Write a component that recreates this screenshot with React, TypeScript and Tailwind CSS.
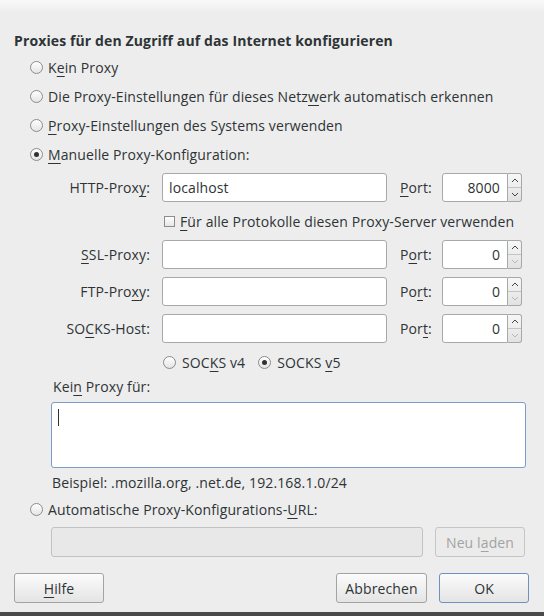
import type { ReactNode } from "react";

const Radio = ({ checked = false }: { checked?: boolean }) => (
  <span className="flex h-[13px] w-[13px] shrink-0 items-center justify-center rounded-full border border-[#8c8c8c] bg-gradient-to-b from-white to-[#e4e4e4]">
    {checked && <span className="h-[5px] w-[5px] rounded-full bg-[#2e3436]" />}
  </span>
);

const U = ({ children }: { children: ReactNode }) => (
  <span className="underline decoration-1 underline-offset-[3px]">{children}</span>
);

const Spin = ({ value, canDown }: { value: string; canDown: boolean }) => (
  <div className="flex h-[29px]">
    <div className="flex w-[66px] items-center justify-end rounded-l-[3px] border border-[#a8a8a8] bg-white pr-[7px]">
      {value}
    </div>
    <div className="flex w-[14px] flex-col rounded-r-[3px] border border-l-0 border-[#a8a8a8] bg-gradient-to-b from-[#f7f7f7] to-[#e2e2e2]">
      <div className="flex flex-1 items-center justify-center border-b border-[#c4c4c4]">
        <svg width="8" height="5" viewBox="0 0 8 5">
          <path d="M1 4 L4 1 L7 4" fill="none" stroke="#444" strokeWidth="1" />
        </svg>
      </div>
      <div className="flex flex-1 items-center justify-center">
        <svg width="8" height="5" viewBox="0 0 8 5">
          <path d="M1 1 L4 4 L7 1" fill="none" stroke={canDown ? "#444" : "#b8b8b8"} strokeWidth="1" />
        </svg>
      </div>
    </div>
  </div>
);

const ProxyRow = ({
  label,
  port,
  value = "",
  portValue,
  canDown,
}: {
  label: ReactNode;
  port: ReactNode;
  value?: string;
  portValue: string;
  canDown: boolean;
}) => (
  <div className="flex h-[29px] items-center">
    <div className="w-[136px] text-right">{label}</div>
    <div className="ml-[12px] flex h-[29px] w-[225px] items-center rounded-[3px] border border-[#a8a8a8] bg-white pl-[6px]">
      {value}
    </div>
    <div className="ml-[13px] w-[42px]">{port}</div>
    <Spin value={portValue} canDown={canDown} />
  </div>
);

const Button = ({
  children,
  w,
  primary = false,
}: {
  children: ReactNode;
  w: string;
  primary?: boolean;
}) => (
  <div
    className={`flex h-[30px] items-center justify-center rounded-[3px] border bg-gradient-to-b from-[#fbfbfb] to-[#e4e4e4] ${w} ${
      primary ? "border-[#7090c0]" : "border-[#a3a3a3]"
    }`}
  >
    {children}
  </div>
);

export default function App() {
  return (
    <div
      className="flex h-[616px] w-[544px] flex-col bg-[#ededed] text-[14px] tracking-[0.12px] text-[#2e3436]"
      style={{ fontFamily: '"Open Sans", "DejaVu Sans", sans-serif' }}
    >
      {/* top edge */}
      <div className="h-[15px] bg-gradient-to-b from-[#f9f9f9] to-[#ebebeb]" />

      <div className="flex flex-1 flex-col pl-[14px]">
        <div className="mt-[17px] h-[18px] font-bold leading-[18px]">
          Proxies für den Zugriff auf das Internet konfigurieren
        </div>

        {/* mode radios */}
        <div className="mt-[3px] flex flex-col pl-[16px]">
          <div className="flex h-[29px] items-center gap-[5px]">
            <Radio />
            <span>
              K<U>e</U>in Proxy
            </span>
          </div>
          <div className="flex h-[29px] items-center gap-[5px]">
            <Radio />
            <span>
              Die Proxy-Einstellungen für dieses Netz<U>w</U>erk automatisch erkennen
            </span>
          </div>
          <div className="flex h-[29px] items-center gap-[5px]">
            <Radio />
            <span>
              <U>P</U>roxy-Einstellungen des Systems verwenden
            </span>
          </div>
          <div className="flex h-[29px] items-center gap-[5px]">
            <Radio checked />
            <span>
              <U>M</U>anuelle Proxy-Konfiguration:
            </span>
          </div>
        </div>

        {/* manual proxies */}
        <div className="mt-[4px] flex flex-col">
          <ProxyRow
            label={
              <>
                HTTP-Prox<U>y</U>:
              </>
            }
            value="localhost"
            port={
              <>
                <U>P</U>ort:
              </>
            }
            portValue="8000"
            canDown
          />
          <div className="my-[4px] flex h-[30px] items-center gap-[5px] pl-[150px]">
            <span className="h-[11px] w-[11px] border border-[#8c8c8c] bg-gradient-to-b from-white to-[#e6e6e6]" />
            <span>
              <U>F</U>ür alle Protokolle diesen Proxy-Server verwenden
            </span>
          </div>
          <ProxyRow
            label={
              <>
                <U>S</U>SL-Proxy:
              </>
            }
            port={
              <>
                P<U>o</U>rt:
              </>
            }
            portValue="0"
            canDown={false}
          />
          <div className="h-[8px]" />
          <ProxyRow
            label={
              <>
                FTP-Pro<U>x</U>y:
              </>
            }
            port={
              <>
                Po<U>r</U>t:
              </>
            }
            portValue="0"
            canDown={false}
          />
          <div className="h-[8px]" />
          <ProxyRow
            label={
              <>
                SO<U>C</U>KS-Host:
              </>
            }
            port={
              <>
                Por<U>t</U>:
              </>
            }
            portValue="0"
            canDown={false}
          />
          <div className="mt-[7px] flex h-[24px] items-center pl-[149px]">
            <Radio />
            <span className="ml-[6px]">
              SOC<U>K</U>S v4
            </span>
            <span className="ml-[13px]">
              <Radio checked />
            </span>
            <span className="ml-[6px]">
              SOCKS <U>v</U>5
            </span>
          </div>
        </div>

        <div className="flex h-[24px] items-center pl-[39px]">
          <span>
            Kei<U>n</U> Proxy für:
          </span>
        </div>
        <div className="ml-[37px] mt-[4px] h-[66px] w-[475px] rounded-[3px] border border-[#7c9cc9] bg-white pl-[6px] pt-[6px]">
          <div className="h-[17px] w-px bg-[#2e3436]" />
        </div>
        <div className="mt-[4px] flex h-[20px] items-center pl-[38px]">
          Beispiel: .mozilla.org, .net.de, 192.168.1.0/24
        </div>
        <div className="mt-[5px] flex h-[24px] items-center gap-[5px] pl-[16px]">
          <Radio />
          <span>
            Automatische Proxy-Konfigurations-<U>U</U>RL:
          </span>
        </div>
        <div className="mt-[6px] flex h-[30px] items-center pl-[37px]">
          <div className="h-[30px] w-[372px] rounded-[3px] border border-[#c2c2c2] bg-[#e8e8e8]" />
          <div className="ml-[12px] flex h-[30px] w-[90px] items-center justify-center rounded-[3px] border border-[#c6c6c6] bg-[#ebebeb] text-[#a3a3a3]">
            <span>
              Neu l<U>a</U>den
            </span>
          </div>
        </div>

        {/* dialog buttons */}
        <div className="mt-[16px] flex h-[30px] items-center">
          <Button w="w-[90px]">
            <span>
              <U>H</U>ilfe
            </span>
          </Button>
          <div className="flex-1" />
          <Button w="w-[91px]">Abbrechen</Button>
          <div className="w-[12px]" />
          <Button w="w-[90px]" primary>
            OK
          </Button>
          <div className="w-[15px]" />
        </div>
      </div>

      {/* bottom edge */}
      <div className="h-[4px] bg-[#4a4a4a]" />
    </div>
  );
}
